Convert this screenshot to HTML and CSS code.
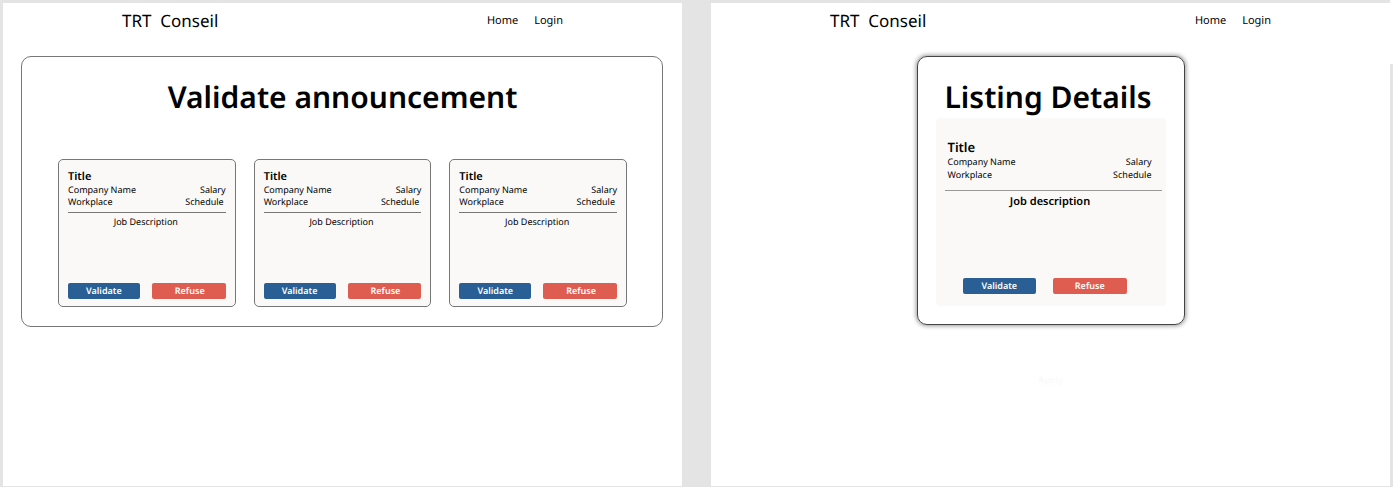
FILE: index.html
```html
<!DOCTYPE html>
<html lang="en">
<head>
<meta charset="utf-8">
<title>TRT Conseil</title>
<link rel="stylesheet" href="styles.css">
</head>
<body>
<div class="board">
  <section class="screen">
    <header class="topbar">
      <span class="brand">TRT&nbsp; Conseil</span>
      <nav class="nav"><a href="#">Home</a><a href="#">Login</a></nav>
    </header>
    <main class="panel">
      <h1 class="heading">Validate announcement</h1>
      <div class="cards">
        <article class="card">
          <h2 class="card-title">Title</h2>
          <div class="row"><span>Company Name</span><span>Salary</span></div>
          <div class="row row-last"><span>Workplace</span><span>Schedule</span></div>
          <p class="description">Job Description</p>
          <div class="actions"><button class="btn validate" type="button">Validate</button><button class="btn refuse" type="button">Refuse</button></div>
        </article>
        <article class="card">
          <h2 class="card-title">Title</h2>
          <div class="row"><span>Company Name</span><span>Salary</span></div>
          <div class="row row-last"><span>Workplace</span><span>Schedule</span></div>
          <p class="description">Job Description</p>
          <div class="actions"><button class="btn validate" type="button">Validate</button><button class="btn refuse" type="button">Refuse</button></div>
        </article>
        <article class="card">
          <h2 class="card-title">Title</h2>
          <div class="row"><span>Company Name</span><span>Salary</span></div>
          <div class="row row-last"><span>Workplace</span><span>Schedule</span></div>
          <p class="description">Job Description</p>
          <div class="actions"><button class="btn validate" type="button">Validate</button><button class="btn refuse" type="button">Refuse</button></div>
        </article>
      </div>
    </main>
  </section>
  <section class="screen">
    <header class="topbar">
      <span class="brand">TRT&nbsp; Conseil</span>
      <nav class="nav"><a href="#">Home</a><a href="#">Login</a></nav>
    </header>
    <main class="dialog">
      <h1 class="heading">Listing Details</h1>
      <article class="details">
        <div class="summary">
          <h2 class="details-title">Title</h2>
          <div class="row"><span>Company Name</span><span>Salary</span></div>
          <div class="row row-last"><span>Workplace</span><span>Schedule</span></div>
        </div>
        <h3 class="details-description">Job description</h3>
        <div class="actions"><button class="btn validate" type="button">Validate</button><button class="btn refuse" type="button">Refuse</button></div>
      </article>
    </main>
    <button class="apply" type="button">Apply</button>
  </section>
  <div class="corner"></div>
</div>
</body>
</html>
```
FILE: styles.css
```css
* { box-sizing: border-box; }
body {
  margin: 0;
  background: #e4e4e4;
  color: #000;
  font-family: "Noto Sans", sans-serif;
  text-rendering: geometricPrecision;
}
h1, h2, h3, p { margin: 0; font-weight: 600; }
button { text-rendering: inherit; }
.board {
  position: relative;
  display: flex;
  gap: 29px;
  min-height: 100vh;
  padding: 3px 3px 1px;
}
.screen {
  flex: 1;
  display: flex;
  flex-direction: column;
  background: #fff;
}
.topbar {
  display: flex;
  justify-content: space-between;
  align-items: center;
  height: 53px;
  padding: 0 119px 18px;
}
.brand { font-size: 17px; line-height: 24px; }
.nav { display: flex; gap: 16px; font-size: 11px; line-height: 16px; }
.nav a { color: inherit; text-decoration: none; }
.panel {
  margin: 0 19px 0 18px;
  padding: 18px 35px 19px 36px;
  border: 1px solid #777;
  border-radius: 10px;
}
.heading {
  font-size: 30px;
  line-height: 43px;
  text-align: center;
  white-space: nowrap;
}
.cards {
  display: grid;
  grid-template-columns: repeat(3, 1fr);
  gap: 18px;
  margin-top: 41px;
}
.card {
  display: flex;
  flex-direction: column;
  min-height: 148px;
  padding: 9px 9px 7px;
  background: #faf9f8;
  border: 1px solid #777;
  border-radius: 5px;
}
.card-title { font-size: 11px; line-height: 15px; }
.row {
  display: flex;
  justify-content: space-between;
  font-size: 9px;
  line-height: 12px;
}
.card .row-last {
  padding: 0 2px 4px 0;
  border-bottom: 1px solid #777;
}
.description {
  padding: 3px 2px 0 0;
  font-size: 9px;
  font-weight: 400;
  line-height: 12px;
  text-align: center;
}
.actions {
  display: flex;
  gap: 12px;
  margin-top: auto;
}
.btn {
  flex: 1;
  height: 16px;
  padding: 0;
  border: 0;
  border-radius: 2px;
  color: #fff;
  font: 600 9px/16px "Noto Sans", sans-serif;
}
.validate { background: #295f94; }
.refuse { background: #df5d50; padding-left: 2px; }
.details .refuse { padding-left: 0; }
.dialog {
  align-self: center;
  width: 268px;
  padding: 18px 18px 18px;
  border: 1px solid #444;
  border-radius: 10px;
  box-shadow: 0 0 4px 1px rgba(0, 0, 0, 0.4);
}
.dialog .heading { padding-right: 5px; }
.details {
  display: flex;
  flex-direction: column;
  min-height: 188px;
  padding: 21px 4px 12px 9px;
  background: #faf9f8;
  border-radius: 4px;
}
.summary {
  padding: 0 10px 9px 3px;
  border-bottom: 1px solid #999;
}
.details-title { font-size: 13px; line-height: 16px; }
.summary .row { line-height: 13px; }
.details-description {
  padding: 3px 6px 0 0;
  font-size: 11px;
  line-height: 16px;
  text-align: center;
}
.details .actions { gap: 17px; padding: 0 35px 0 18px; }
.apply {
  align-self: center;
  margin-top: 48px;
  padding: 0;
  border: 0;
  background: none;
  color: #fafafa;
  font: 600 9px/13px "Noto Sans", sans-serif;
}
/* White notch over the board's top-right edge */
.corner {
  position: absolute;
  top: 0;
  right: 0;
  width: 3px;
  height: 64px;
  background: #fff;
}
```
